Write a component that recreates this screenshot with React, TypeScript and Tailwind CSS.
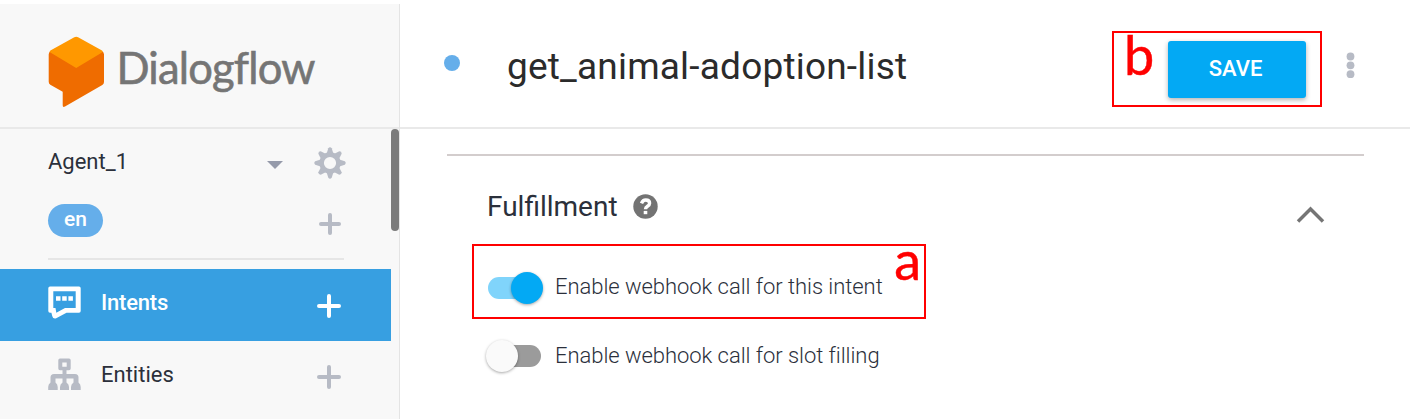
import React from "react";

function Plus({ className, size = 22, thickness = 4 }: { className: string; size?: number; thickness?: number }) {
  const c = size / 2;
  return (
    <svg className={className} width={size} height={size} viewBox={`0 0 ${size} ${size}`} stroke="currentColor" strokeWidth={thickness} strokeLinecap="round">
      <path d={`M${c} 2V${size - 2}M2 ${c}H${size - 2}`} />
    </svg>
  );
}

function Logo() {
  return (
    <svg className="ml-12 mt-8 shrink-0" width="57" height="72" viewBox="0 0 57 72">
      <path d="M.7 18.5Q.7 16 2.5 15.5L28.200 28L54 15.500Q56 16 56 18.500V46Q56 48 54.300 49L17 70.500Q14.700 71.700 14.700 69.300V55.700L2.300 48.700Q.7 47.700 .7 45.700Z" fill="#ef6c00" />
      <path d="M26.300 1.200Q28.200 .2 30.100 1.200L54 14.500Q55.700 15.500 54 16.500L28.200 32L2.400 16.500Q.7 15.500 2.400 14.500Z" fill="#ff9800" />
    </svg>
  );
}

function Gear() {
  return (
    <svg className="text-[#b7bbc5]" width="32" height="32" viewBox="-16 -16 32 32" fill="none" stroke="currentColor">
      <circle r="8.400" strokeWidth="4.600" />
      {[0, 45, 90, 135, 180, 225, 270, 315].map((a) => (
        <path key={a} transform={`rotate(${a})`} d="M-3.700 -8.500L-1.700 -14.800Q0 -16.600 1.700 -14.800L3.700 -8.500Z" fill="currentColor" stroke="none" />
      ))}
    </svg>
  );
}

function IntentsIcon() {
  return (
    <svg className="-mt-[5px]" width="33" height="33" viewBox="0 0 33 33">
      <path fill="#fff" fillRule="evenodd" d="M2 .5H31Q32.700 .5 32.700 2.200V25Q32.700 26.700 31 26.700H18.500L8.200 32.300Q5 33.200 4.300 30.200L3.400 26.700H2Q.3 26.700 .3 25V2.200Q.3 .5 2 .5ZM5.300 5.300V22H7.500L8.300 26.700L17 22H27.700V5.300Z" />
      <path fill="#fff" d="M8 10.300h4.500v4.500H8zM14.200 10.300h4.500v4.500h-4.500zM20.400 10.300h4.500v4.500h-4.500z" />
    </svg>
  );
}

function EntitiesIcon() {
  return (
    <svg className="-mt-[5px]" width="33" height="33" viewBox="0 0 33 33" fill="#b7bbc5">
      <path fillRule="evenodd" d="M12 .5H21Q22.700 .5 22.700 2.200V10.500Q22.700 12.200 21 12.200H18.500V16H27Q30.500 16 30.500 19.500V24.500Q32.700 26 32.700 29V32H23V29Q23 26 25.500 24.500V20.500H18.500V24.500Q21 26 21 29V32H12V29Q12 26 14.500 24.500V20.500H7.500V24.500Q9.700 26 9.700 29V32H.2V29Q.2 26 2.500 24.500V19.500Q2.500 16 6 16H14.500V12.200H12Q10.300 12.200 10.300 10.500V2.200Q10.300 .5 12 .5ZM14.300 4.500V8.700H18.700V4.500Z" />
    </svg>
  );
}

function Sidebar() {
  return (
    <aside className="flex w-[400px] shrink-0 flex-col border-r border-[#e4e4e4] bg-[#f8f8f8] text-[22px] text-[#2b303b]">
      <div className="flex h-[125px] border-b-2 border-[#e9e9e9]">
        <Logo />
        <span className="ml-[11.5px] mt-[33px] font-[Lato] text-[43.5px] leading-[60px] tracking-[-0.8px] text-[#757575] [-webkit-text-stroke:0.6px_#757575]">Dialogflow</span>
      </div>
      <div className="flex">
        <div className="w-[391px]">
          <div className="flex h-[140px] flex-col px-12 pr-[45px]">
            <div className="mt-[18px] flex h-8 items-center">
              <span className="-mt-0.5 flex-1 leading-8">Agent_1</span>
              <svg className="mr-[31px] mt-[3px]" width="16" height="8" viewBox="0 0 16 8"><path d="M0 0H16L8 8Z" fill="#959aaa" /></svg>
              <Gear />
            </div>
            <div className="mt-[25px] flex h-8 items-center justify-between">
              <span className="flex h-[33px] w-[55px] items-center justify-center rounded-full bg-[#65aeea] text-[21px] font-medium text-white">en</span>
              <Plus className="mr-[5px] mt-[8px] text-[#b7bbc5]" />
            </div>
            <div className="mt-[22px] mr-0.5 h-0.5 bg-[#e6e6e6]" />
          </div>
          <div className="flex h-[72px] items-center bg-[#379fe1] pl-12 pr-[50px] font-medium text-white">
            <IntentsIcon />
            <span className="ml-5 flex-1 pb-1.5 tracking-[-0.2px]">Intents</span>
            <Plus className="mt-px text-white" size={24} thickness={4} />
          </div>
          <div className="flex h-[72px] items-center pl-12 pr-[50px]">
            <EntitiesIcon />
            <span className="ml-5 flex-1 pb-1.5">Entities</span>
            <Plus className="text-[#b7bbc5]" size={24} />
          </div>
        </div>
        <div className="h-[102px] w-2 rounded-full bg-[#7b7b7b]" />
      </div>
    </aside>
  );
}

function Toggle({ on }: { on: boolean }) {
  return (
    <span className={`relative h-[22px] w-[53px] rounded-full ${on ? "-mt-px bg-[#80d4fb]" : "bg-[#9b9b9b]"}`}>
      <span className={`absolute -top-[5px] size-8 rounded-full shadow-[0_1px_3px_rgba(0,0,0,0.35)] ${on ? "-right-0.5 bg-[#03a9f4]" : "-left-0.5 bg-[#fafafa]"}`} />
    </span>
  );
}

export default function App() {
  return (
    <div className="flex h-[419px] w-[1410px] overflow-hidden bg-white pt-1 font-[Roboto,sans-serif]">
      <Sidebar />
      <main className="min-w-0 flex-1">
        <header className="flex h-[125px] border-b-2 border-[#e9e9e9] pl-11">
          <span className="mt-[51px] size-4 rounded-full bg-[#65aeea]" />
          <h1 className="ml-[47px] mt-[38px] w-[605px] text-[37px] leading-[50px] tracking-[0.2px] text-[#2b2b2b]">get_animal-adoption-list</h1>
          <div className="relative mt-[27px] flex h-[76px] w-[210px] border-2 border-[#f00] pl-[54px] pt-2">
            <span className="absolute left-[10px] top-[-10px] font-[Lato] text-[54px] leading-[64px] text-[#f00] [-webkit-text-stroke:0.5px_#f00]">b</span>
            <button className="h-[57px] w-[138px] rounded-[3px] bg-[#03a9f4] pr-[3px] pb-0.5 text-[22px] font-medium text-white shadow-[0_2px_5px_rgba(0,0,0,0.3)]">SAVE</button>
          </div>
          <svg className="ml-6 mt-12" width="9" height="28" viewBox="0 0 9 28" fill="#b7bbc5">
            <circle cx="4.500" cy="4.500" r="3.900" /><circle cx="4.500" cy="13.300" r="3.900" /><circle cx="4.500" cy="22.200" r="3.900" />
          </svg>
        </header>
        <section className="ml-[47px] mt-[25px] w-[917px] border-t-2 border-[#d3cdcd] pl-[25px]">
          <div className="flex h-[88px] pl-[15px]">
            <h2 className="mt-[34px] text-[28px] leading-[34px] text-[#2b303b]">Fulfillment</h2>
            <svg className="ml-[15px] mt-[38px]" width="25" height="25" viewBox="0 0 25 25">
              <circle cx="12.500" cy="12.500" r="12.200" fill="#737373" />
              <path d="M8.500 9.300Q9.800 6 12.800 6Q16.600 6 16.600 9.300Q16.600 11 14.500 12.300Q12.500 13.500 12.500 15.200" fill="none" stroke="#fff" strokeWidth="3.400" />
              <path d="M10.700 16.900h3.600v3.300h-3.600z" fill="#fff" />
            </svg>
            <svg className="ml-auto mr-[39px] mt-[50px]" width="29" height="17" viewBox="0 0 29 17" fill="none" stroke="#757575" strokeWidth="3.500"><path d="M2 15.500L14.500 3L27 15.500" /></svg>
          </div>
          <div className="relative flex h-[75px] w-[454px] border-2 border-[#f00] pl-3.5 pt-8 text-[22px] font-light text-[#2b303b]">
            <Toggle on />
            <span className="ml-[14px] -mt-[5px] leading-7 tracking-[-0.05px]">Enable webhook call for this intent</span>
            <span className="absolute right-[3px] top-[-18px] font-[Lato] text-[54px] font-normal leading-[64px] text-[#f00] [-webkit-text-stroke:0.5px_#f00]">a</span>
          </div>
          <div className="mt-[26px] flex pl-4 text-[22px] font-light text-[#2b303b]">
            <Toggle on={false} />
            <span className="ml-[14px] -mt-[3px] leading-7 tracking-[-0.05px]">Enable webhook call for slot filling</span>
          </div>
        </section>
      </main>
    </div>
  );
}
